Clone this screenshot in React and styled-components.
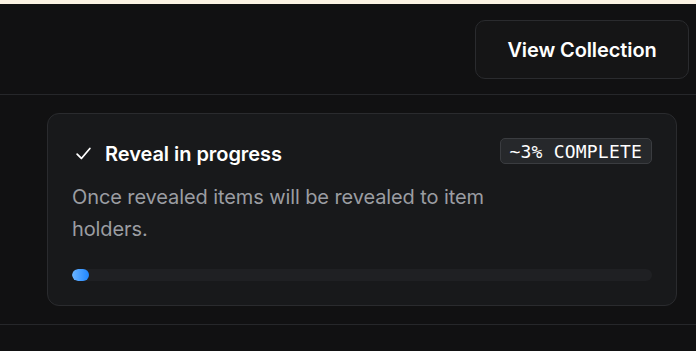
import styled, { createGlobalStyle } from "styled-components";

const GlobalStyle = createGlobalStyle`
  html, body {
    margin: 0;
    padding: 0;
    background: #111112;
  }
  body {
    font-family: Inter, "Noto Sans", sans-serif;
    -webkit-font-smoothing: antialiased;
  }
`;

const Page = styled.div`
  width: 696px;
  height: 351px;
  overflow: hidden;
  background: #111112;
  border-top: 4px solid #fcf3e3;
  box-sizing: border-box;
`;

const Header = styled.div`
  display: flex;
  justify-content: flex-end;
  padding: 16px 7px 15px 0;
  border-bottom: 1px solid #26272a;
`;

const Button = styled.button`
  width: 214px;
  height: 59px;
  background: #151516;
  border: 1px solid #2a2b2e;
  border-radius: 10px;
  color: #ffffff;
  font-family: Inter, sans-serif;
  font-size: 20px;
  font-weight: 600;
  letter-spacing: -0.1px;
  cursor: pointer;
`;

const Section = styled.div`
  padding: 18px 19px 18px 47px;
  border-bottom: 1px solid #26272a;
`;

const Card = styled.div`
  background: #18191b;
  border: 1px solid #2a2b2e;
  border-radius: 12px;
  padding: 24px;
  display: flex;
  flex-direction: column;
`;

const HeadRow = styled.div`
  display: flex;
  justify-content: space-between;
  align-items: center;
  height: 26px;
`;

const Title = styled.div`
  display: flex;
  align-items: center;
  gap: 13px;
  padding-left: 3px;
  margin-top: 5px;
  color: #ffffff;
  font-size: 20px;
  font-weight: 600;
  letter-spacing: -0.05px;
`;

const Badge = styled.div`
  height: 26px;
  box-sizing: border-box;
  padding: 0 9px;
  display: flex;
  align-items: center;
  background: #26282b;
  border: 1px solid #3a3c40;
  border-radius: 5px;
  color: #ffffff;
  font-family: "DejaVu Sans Mono", "Liberation Mono", monospace;
  font-size: 18px;
  font-weight: 500;
  letter-spacing: 0.2px;
`;

const Description = styled.p`
  margin: 17px 0 24px;
  max-width: 440px;
  color: #9b9da2;
  font-size: 20px;
  line-height: 32px;
  letter-spacing: -0.1px;
`;

const Track = styled.div`
  height: 12px;
  border-radius: 6px;
  background: #1f2023;
  overflow: hidden;
`;

const Fill = styled.div`
  height: 100%;
  border-radius: 6px;
  background: linear-gradient(90deg, #6bb4ff, #1f86ff);
`;

const Check = () => (
  <svg width="17" height="17" viewBox="0 0 24 24" fill="none" stroke="#ffffff" strokeWidth="2.5" strokeLinecap="round" strokeLinejoin="round">
    <path d="M3 13l6 6L21 5" />
  </svg>
);

export default function App() {
  const progress = 17;
  return (
    <>
      <GlobalStyle />
      <Page>
        <Header>
          <Button>View Collection</Button>
        </Header>
        <Section>
          <Card>
            <HeadRow>
              <Title>
                <Check />
                Reveal in progress
              </Title>
              <Badge>~3% COMPLETE</Badge>
            </HeadRow>
            <Description>
              Once revealed items will be revealed to item holders.
            </Description>
            <Track>
              <Fill style={{ width: `${progress}px` }} />
            </Track>
          </Card>
        </Section>
      </Page>
    </>
  );
}
